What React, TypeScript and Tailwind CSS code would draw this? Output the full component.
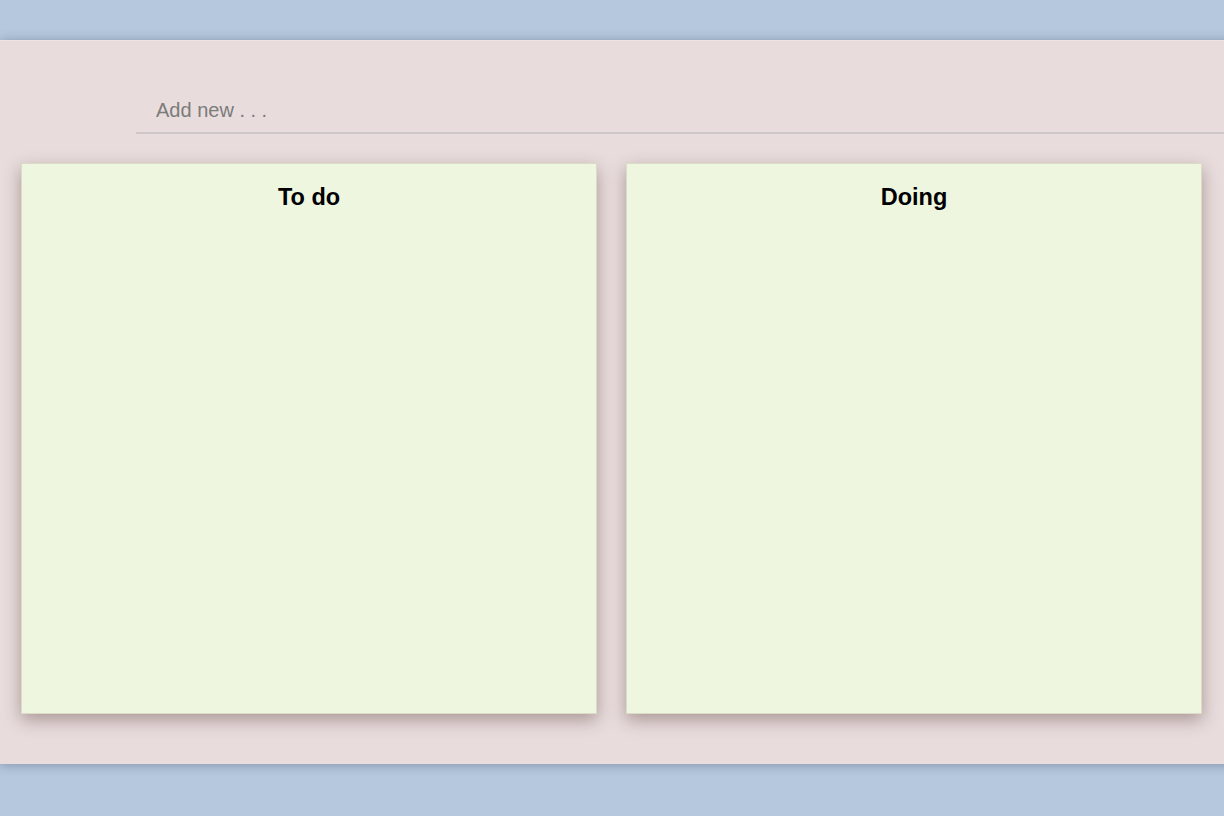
import { useState } from 'react';

const columns = ['To do', 'Doing'];

const App = () => {
    const [draft, setDraft] = useState('');

    return (
        <div className="min-h-[816px] w-full overflow-hidden bg-[#b5c8de] pt-[40px] font-['Liberation_Sans',Arial,sans-serif]">
            {/* Board panel */}
            <div className="w-[1900px] h-[724px] bg-[#e8dcdc] border-t border-[#eee4e4] pt-[47px] shadow-[0_1px_10px_rgba(40,50,70,0.35)]">
                <input
                    value={draft}
                    onChange={(e) => setDraft(e.target.value)}
                    placeholder="Add new . . ."
                    className="block ml-[136px] w-[1500px] h-[46px] bg-transparent border-b-2 border-[#cfc8c8] pl-[20px] text-[20px] text-[#333] placeholder:text-[#7b7b7b] outline-none"
                />

                <div className="flex gap-[29px] ml-[21px] mt-[29px]">
                    {columns.map((title) => (
                        <div
                            key={title}
                            className="w-[576px] h-[551px] shrink-0 bg-[#eff6e0] border border-[#dcdcc6] shadow-[0_6px_16px_rgba(80,50,50,0.4)]"
                        >
                            <h2 className="pt-[21px] text-center text-[23.5px] leading-[24px] font-bold text-black">
                                {title}
                            </h2>
                        </div>
                    ))}
                </div>
            </div>
        </div>
    );
};

export default App;
